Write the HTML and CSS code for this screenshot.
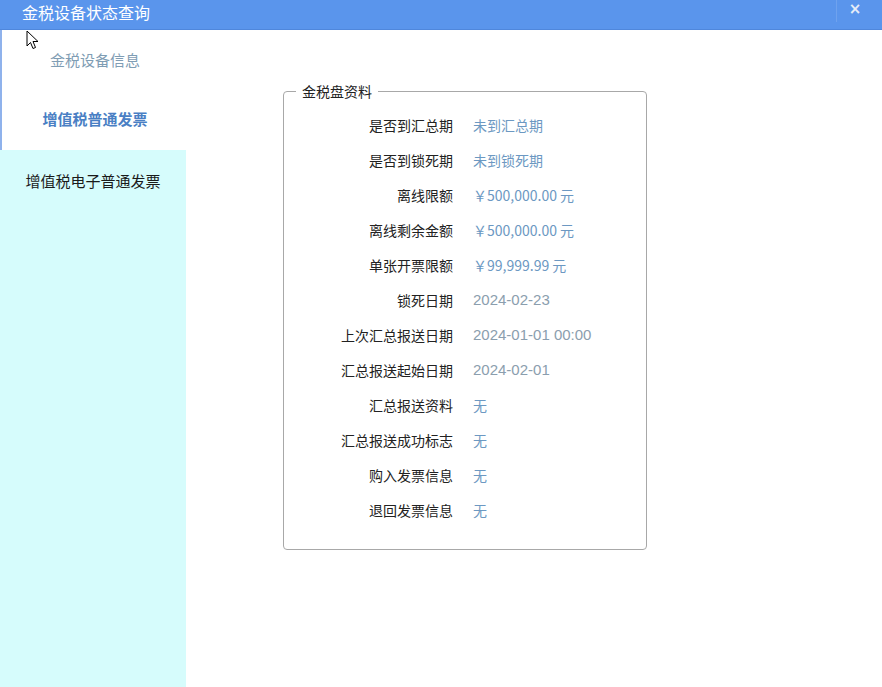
FILE: index.html
```html
<!DOCTYPE html>
<html lang="zh-CN">
<head>
<meta charset="utf-8">
<title>金税设备状态查询</title>
<link rel="stylesheet" href="styles.css">
</head>
<body>
<div class="window">
  <header class="titlebar">
    <span class="title">金税设备状态查询</span>
    <span class="sep"></span>
    <span class="close">×</span>
  </header>
  <div class="body">
    <nav class="sidebar">
      <div class="nav-item nav-info">金税设备信息</div>
      <div class="nav-item nav-plain">增值税普通发票</div>
      <div class="nav-item nav-elec">增值税电子普通发票</div>
    </nav>
    <main class="main">
      <fieldset class="panel">
        <legend>金税盘资料</legend>
        <div class="grid">
          <div class="lbl">是否到汇总期</div><div class="val">未到汇总期</div>
          <div class="lbl">是否到锁死期</div><div class="val">未到锁死期</div>
          <div class="lbl">离线限额</div><div class="val">￥500,000.00 元</div>
          <div class="lbl">离线剩余金额</div><div class="val">￥500,000.00 元</div>
          <div class="lbl">单张开票限额</div><div class="val">￥99,999.99 元</div>
          <div class="lbl">锁死日期</div><div class="val date">2024-02-23</div>
          <div class="lbl">上次汇总报送日期</div><div class="val date">2024-01-01 00:00</div>
          <div class="lbl">汇总报送起始日期</div><div class="val date">2024-02-01</div>
          <div class="lbl">汇总报送资料</div><div class="val">无</div>
          <div class="lbl">汇总报送成功标志</div><div class="val">无</div>
          <div class="lbl">购入发票信息</div><div class="val">无</div>
          <div class="lbl">退回发票信息</div><div class="val">无</div>
        </div>
      </fieldset>
    </main>
  </div>
  <svg class="cursor" width="14" height="20" viewBox="0 0 14 20"><path d="M1 1 L1 16 L4.5 12.5 L7 18.5 L9.5 17.5 L7 11.5 L12 11.5 Z" fill="#fff" stroke="#000" stroke-width="1"/></svg>
</div>
</body>
</html>
```
FILE: styles.css
```css
* { box-sizing: border-box; }
html, body { margin: 0; padding: 0; }
body {
  width: 882px;
  height: 687px;
  overflow: hidden;
  background: #fff;
  font-family: "Noto Sans CJK SC", "Noto Sans", sans-serif;
  color: #222;
}
.window {
  position: relative;
  width: 882px;
  height: 687px;
  display: flex;
  flex-direction: column;
}
.titlebar {
  height: 30px;
  background: #5a95ec;
  display: flex;
  align-items: flex-start;
  padding-left: 22px;
  border-bottom: 1px solid #4f87dc;
}
.title {
  color: #fff;
  font-size: 16px;
  line-height: 20px;
  flex: 1;
  margin-top: 2px;
}
.sep {
  width: 1px;
  height: 22px;
  background: #6fa2ee;
}
.close {
  width: 36px;
  text-align: center;
  color: #e6edf8;
  font-size: 15px;
  font-family: "DejaVu Sans", sans-serif;
  font-weight: bold;
  line-height: 18px;
  margin-right: 9px;
}
.body {
  flex: 1;
  display: flex;
  min-height: 0;
}
.sidebar {
  width: 188px;
  display: flex;
  flex-direction: column;
  border-left: 2px solid #8fb2ec;
  background: #fff;
}
.nav-item {
  text-align: center;
  font-size: 15px;
  line-height: 20px;
}
.nav-info {
  height: 60px;
  padding-top: 20px;
  color: #7f9db4;
}
.nav-plain {
  height: 60px;
  padding-top: 19px;
  color: #4a7fc4;
  font-weight: bold;
}
.nav-elec {
  flex: 1;
  background: #d6fcfc;
  padding-top: 21px;
  color: #1a1a1a;
  margin-left: -2px;
  margin-right: 2px;
}
.main {
  flex: 1;
  padding: 51px 0 0 95px;
}
.panel {
  width: 364px;
  margin: 0;
  padding: 6px 0 22px 0;
  border: 1px solid #a8a8a8;
  border-radius: 4px;
}
.panel legend {
  font-size: 14px;
  line-height: 20px;
  color: #222;
  padding: 0 6px;
  margin-left: 12px;
}
.grid {
  display: grid;
  grid-template-columns: 169px auto;
  column-gap: 20px;
  grid-auto-rows: 35px;
  align-items: center;
  font-size: 14px;
}
.lbl {
  text-align: right;
  color: #222;
}
.val {
  color: #6c98c2;
}
.val.date {
  color: #8b9eae;
  font-family: "Liberation Sans", "Noto Sans CJK SC", sans-serif;
  font-size: 15px;
}
.cursor {
  position: absolute;
  left: 26px;
  top: 30px;
}
```
